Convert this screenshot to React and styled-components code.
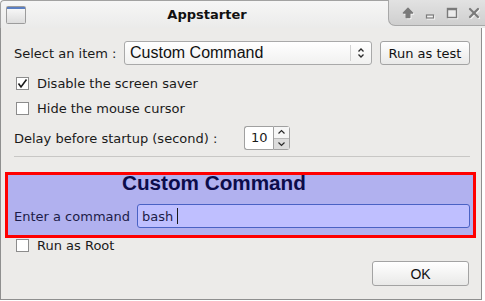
import React from "react";
import styled, { createGlobalStyle } from "styled-components";

const GlobalStyle = createGlobalStyle`
  html, body {
    margin: 0;
    padding: 0;
    background: #ffffff;
  }
  body {
    font-family: "DejaVu Sans", "Noto Sans", sans-serif;
    font-size: 13px;
    color: #1a1a1a;
  }
`;

const Window = styled.div`
  display: flex;
  flex-direction: column;
  align-items: flex-start;
  width: 485px;
`;

const TitleBar = styled.div`
  display: flex;
  align-items: flex-start;
  width: 485px;
  height: 28px;
  box-sizing: border-box;
  border-top: 1px solid #a2a2a2;
  border-left: 1px solid #a2a2a2;
  border-top-left-radius: 4px;
  background: linear-gradient(#f6f6f6, #ebebea);
`;

const AppIcon = styled.svg`
  margin: 5px 0 0 5px;
  flex: none;
`;

const Title = styled.div`
  flex: 1;
  text-align: center;
  font-weight: bold;
  font-size: 13px;
  line-height: 27px;
  color: #111;
`;

const Controls = styled.div`
  display: flex;
  align-items: center;
  width: 97px;
  height: 26px;
  margin-top: -1px;
  box-sizing: border-box;
  padding-left: 8px;
  border-left: 1px solid #a8a8a8;
  border-bottom: 1px solid #a8a8a8;
  border-bottom-left-radius: 7px;
  background: linear-gradient(#e2e2e2, #cfcfcf);
`;

const ControlSlot = styled.div`
  width: 22px;
  height: 26px;
  display: flex;
  align-items: center;
  justify-content: center;
  svg {
    filter: drop-shadow(1px 1px 0 #f4f4f4);
  }
`;

const Body = styled.div`
  width: 482px;
  box-sizing: border-box;
  border: 1px solid #8f8f8f;
  border-top: none;
  background: #ecebe9;
  padding: 13px 11px 13px 13px;
  display: flex;
  flex-direction: column;
`;

const Row = styled.div`
  display: flex;
  align-items: center;
  height: ${(p) => p.h || 24}px;
  margin-top: ${(p) => p.mt || 0}px;
`;

const Label = styled.div`
  width: ${(p) => p.w}px;
  flex: none;
  white-space: nowrap;
  color: ${(p) => p.color || "#1a1a1a"};
`;

const Combo = styled.div`
  display: flex;
  align-items: center;
  width: 248px;
  height: 24px;
  box-sizing: border-box;
  border: 1px solid #a9a9a9;
  border-radius: 3px;
  background: linear-gradient(#ffffff, #f1f1f0);
  padding-left: 5px;
`;

const ComboText = styled.div`
  flex: 1;
  font-family: "Liberation Sans", Arial, sans-serif;
  font-size: 16px;
  color: #111;
`;

const ComboArrow = styled.div`
  width: 20px;
  height: 16px;
  border-left: 1px solid #d2d2d2;
  display: flex;
  align-items: center;
  justify-content: center;
`;

const PushButton = styled.div`
  width: ${(p) => p.w}px;
  height: ${(p) => p.h || 24}px;
  box-sizing: border-box;
  margin-left: ${(p) => p.ml || 0}px;
  border: 1px solid #a3a3a3;
  border-radius: 3px;
  background: linear-gradient(#ffffff, #e9e9e8);
  display: flex;
  align-items: center;
  justify-content: center;
  font-family: ${(p) => (p.arial ? '"Liberation Sans", Arial, sans-serif' : "inherit")};
  font-size: ${(p) => (p.arial ? 14 : 13)}px;
  color: #111;
`;

const Box = styled.div`
  width: 13px;
  height: 13px;
  box-sizing: border-box;
  margin: 0 8px 0 2px;
  border: 1px solid #8c8c8c;
  background: #fff;
  display: flex;
  align-items: center;
  justify-content: center;
`;

const Spin = styled.div`
  display: flex;
  width: 46px;
  height: 24px;
`;

const SpinField = styled.div`
  width: 29px;
  box-sizing: border-box;
  border: 1px solid #a0a0a0;
  border-right: none;
  border-radius: 3px 0 0 3px;
  background: #fff;
  padding-left: 6px;
  line-height: 22px;
`;

const SpinButtons = styled.div`
  width: 17px;
  box-sizing: border-box;
  border: 1px solid #a0a0a0;
  border-radius: 0 3px 3px 0;
  display: flex;
  flex-direction: column;
`;

const SpinHalf = styled.div`
  flex: 1;
  display: flex;
  align-items: center;
  justify-content: center;
  background: ${(p) => (p.down ? "#dcdcdc" : "#f6f6f6")};
  border-top: ${(p) => (p.down ? "1px solid #b8b8b8" : "none")};
`;

const Separator = styled.div`
  height: 1px;
  margin-top: 6px;
  background: #c8c7c5;
`;

const RedBox = styled.div`
  margin: 15px -6px 0 -9px;
  border: 3px solid #ff0000;
  background: #b1b1ef;
  padding: 0 3px 7px 6px;
  display: flex;
  flex-direction: column;
`;

const Heading = styled.div`
  font-family: "Liberation Sans", Arial, sans-serif;
  font-weight: bold;
  font-size: 20.7px;
  line-height: 16px;
  padding-left: 108px;
  color: #0c0c4a;
`;

const LineEdit = styled.div`
  flex: 1;
  height: 24px;
  box-sizing: border-box;
  border: 1px solid #4a62c4;
  border-radius: 3px;
  background: #bfbfff;
  padding-left: 4px;
  display: flex;
  align-items: center;
  color: #1c1c48;
  white-space: pre;
`;

const Caret = styled.span`
  display: inline-block;
  width: 1px;
  height: 16px;
  background: #1a1a1a;
`;

const Actions = styled.div`
  display: flex;
  justify-content: flex-end;
  margin-top: 9px;
  padding-right: 1px;
`;

function Check({ checked }) {
  return (
    <Box>
      {checked && (
        <svg width="11" height="11" viewBox="0 0 11 11">
          <polyline points="1.5,5.5 4,9 9.5,1.5" fill="none" stroke="#1a1a1a" strokeWidth="1.6" />
        </svg>
      )}
    </Box>
  );
}

function CheckRow({ checked, label, mt, h }) {
  return (
    <Row h={h || 18} mt={mt}>
      <Check checked={checked} />
      <span>{label}</span>
    </Row>
  );
}

function UpDownIcon() {
  return (
    <svg width="8" height="12" viewBox="0 0 8 12">
      <polyline points="1.5,4.5 4,2 6.5,4.5" fill="none" stroke="#2a2a2a" strokeWidth="1.3" />
      <polyline points="1.5,7.5 4,10 6.5,7.5" fill="none" stroke="#2a2a2a" strokeWidth="1.3" />
    </svg>
  );
}

function Chevron({ down }) {
  return (
    <svg width="9" height="6" viewBox="0 0 9 6">
      <polyline
        points={down ? "1.5,1.5 4.5,4.5 7.5,1.5" : "1.5,4.5 4.5,1.5 7.5,4.5"}
        fill="none"
        stroke="#2a2a2a"
        strokeWidth="1.2"
      />
    </svg>
  );
}

const iconGrey = "#7a7a7a";

function TitleControls() {
  return (
    <Controls>
      <ControlSlot>
        <svg width="12" height="12" viewBox="0 0 12 12">
          <path d="M6 1.2 L10.6 6 L7.8 6 L7.8 10.6 L4.2 10.6 L4.2 6 L1.4 6 Z" fill={iconGrey} strokeLinejoin="round" stroke={iconGrey} strokeWidth="1.4" />
        </svg>
      </ControlSlot>
      <ControlSlot>
        <svg width="10" height="12" viewBox="0 0 10 12">
          <rect x="1.5" y="8" width="7" height="3" fill="#f2f2f2" stroke={iconGrey} strokeWidth="1.2" />
        </svg>
      </ControlSlot>
      <ControlSlot>
        <svg width="12" height="12" viewBox="0 0 12 12">
          <rect x="1.5" y="1.5" width="9" height="9" fill="#ececec" stroke={iconGrey} strokeWidth="1.4" />
          <line x1="1.5" y1="2.5" x2="10.5" y2="2.5" stroke={iconGrey} strokeWidth="1.5" />
        </svg>
      </ControlSlot>
      <ControlSlot>
        <svg width="12" height="12" viewBox="0 0 12 12">
          <line x1="2" y1="2" x2="10" y2="10" stroke={iconGrey} strokeWidth="2.2" strokeLinecap="round" />
          <line x1="10" y1="2" x2="2" y2="10" stroke={iconGrey} strokeWidth="2.2" strokeLinecap="round" />
        </svg>
      </ControlSlot>
    </Controls>
  );
}

export default function App() {
  return (
    <>
      <GlobalStyle />
      <Window>
        <TitleBar>
          <AppIcon width="20" height="18" viewBox="0 0 20 18">
            <defs>
              <linearGradient id="appicon" x1="0" y1="0" x2="0" y2="1">
                <stop offset="0" stopColor="#fbfbfb" />
                <stop offset="1" stopColor="#dcdcdc" />
              </linearGradient>
            </defs>
            <rect x="0.5" y="0.5" width="19" height="17" rx="1" fill="url(#appicon)" stroke="#9c9c9c" />
            <rect x="1" y="1" width="18" height="2" fill="#5b7fc2" />
          </AppIcon>
          <Title>Appstarter</Title>
          <TitleControls />
        </TitleBar>

        <Body>
          <Row>
            <Label w={110}>Select an item :</Label>
            <Combo>
              <ComboText>Custom Command</ComboText>
              <ComboArrow>
                <UpDownIcon />
              </ComboArrow>
            </Combo>
            <PushButton w={90} ml={8}>Run as test</PushButton>
          </Row>

          <CheckRow checked mt={9} label="Disable the screen saver" />
          <CheckRow mt={7} label="Hide the mouse cursor" />

          <Row mt={9}>
            <Label w={230}>Delay before startup (second) :</Label>
            <Spin>
              <SpinField>10</SpinField>
              <SpinButtons>
                <SpinHalf>
                  <Chevron />
                </SpinHalf>
                <SpinHalf down>
                  <Chevron down />
                </SpinHalf>
              </SpinButtons>
            </Spin>
          </Row>

          <Separator />

          <RedBox>
            <Heading>Custom Command</Heading>
            <Row mt={13}>
              <Label w={123} color="#1c1c48">Enter a command</Label>
              <LineEdit>
                {"bash "}
                <Caret />
              </LineEdit>
            </Row>
          </RedBox>

          <CheckRow h={14} label="Run as Root" />

          <Actions>
            <PushButton w={97} h={25} arial>OK</PushButton>
          </Actions>
        </Body>
      </Window>
    </>
  );
}
